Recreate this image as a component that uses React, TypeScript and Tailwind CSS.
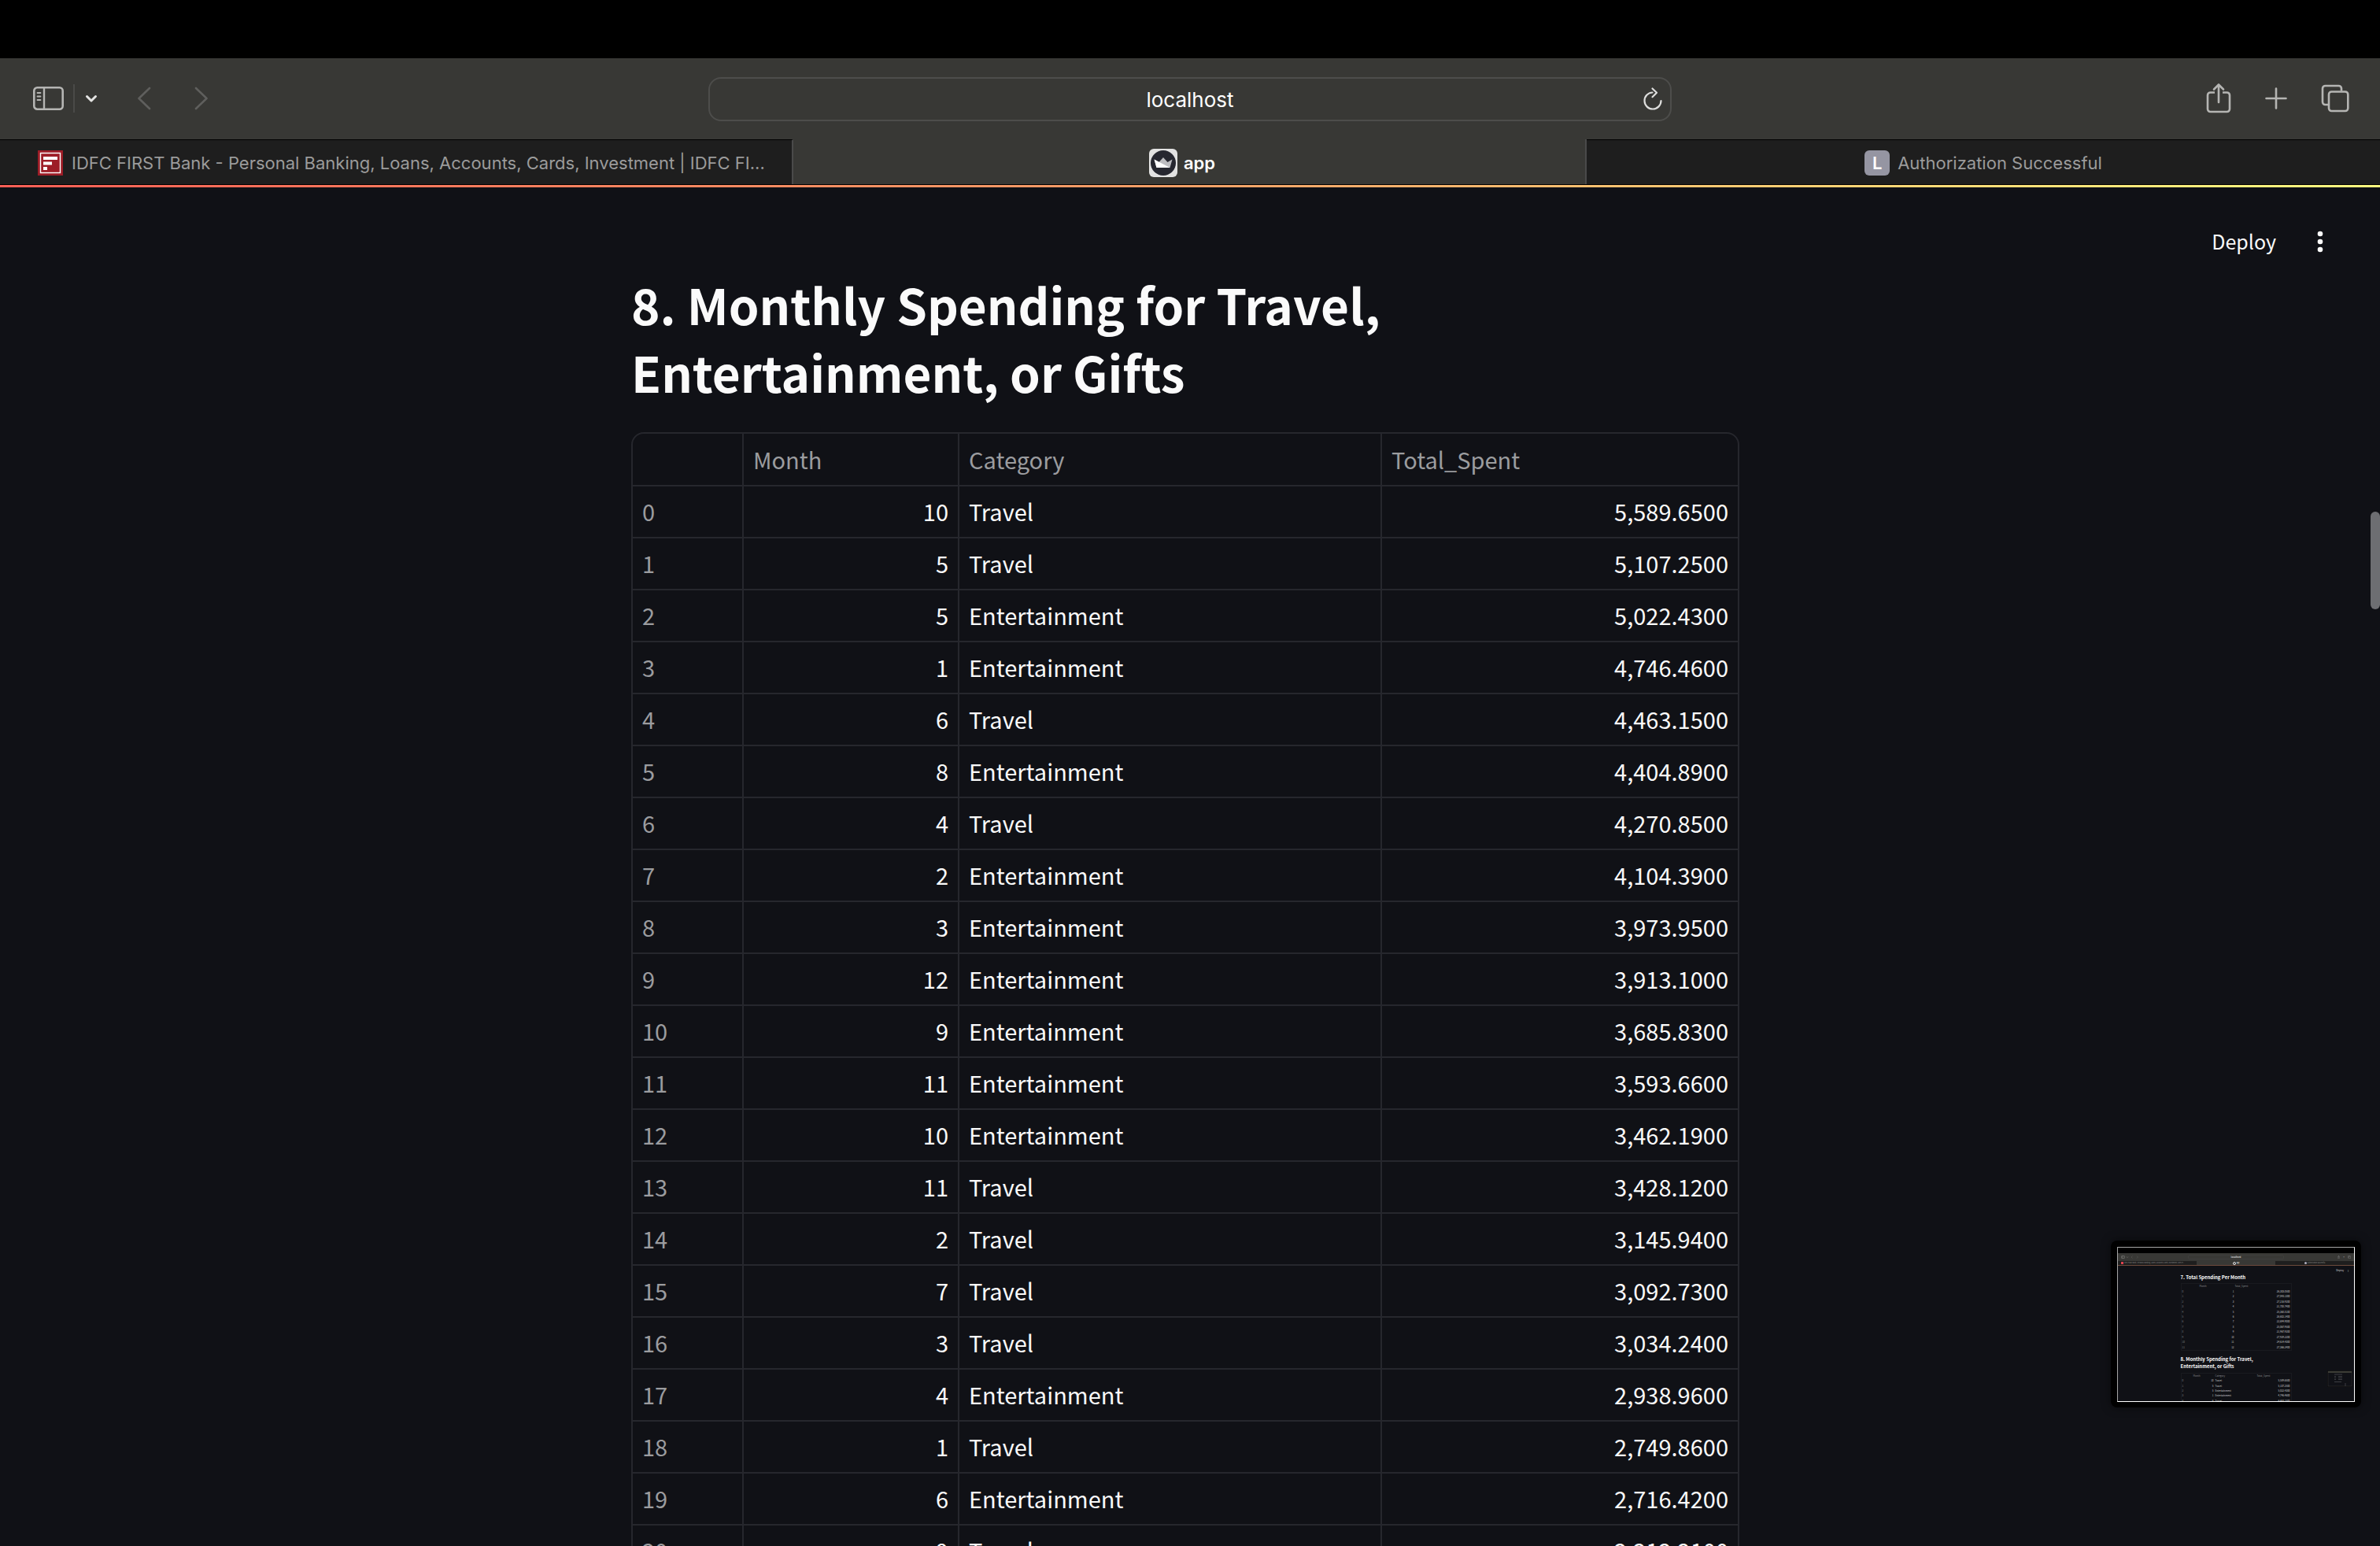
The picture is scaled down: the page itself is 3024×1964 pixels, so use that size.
import { Fragment } from "react";

const rows: [number, string, string][] = [
  [10, "Travel", "5,589.6500"],
  [5, "Travel", "5,107.2500"],
  [5, "Entertainment", "5,022.4300"],
  [1, "Entertainment", "4,746.4600"],
  [6, "Travel", "4,463.1500"],
  [8, "Entertainment", "4,404.8900"],
  [4, "Travel", "4,270.8500"],
  [2, "Entertainment", "4,104.3900"],
  [3, "Entertainment", "3,973.9500"],
  [12, "Entertainment", "3,913.1000"],
  [9, "Entertainment", "3,685.8300"],
  [11, "Entertainment", "3,593.6600"],
  [10, "Entertainment", "3,462.1900"],
  [11, "Travel", "3,428.1200"],
  [2, "Travel", "3,145.9400"],
  [7, "Travel", "3,092.7300"],
  [3, "Travel", "3,034.2400"],
  [4, "Entertainment", "2,938.9600"],
  [1, "Travel", "2,749.8600"],
  [6, "Entertainment", "2,716.4200"],
  [9, "Travel", "2,212.2100"],
];

const monthly = [
  "26,303.0500", "27,043.1300", "27,216.9200", "21,708.7400", "25,368.8100", "26,602.1400",
  "22,694.9000", "25,067.9500", "21,967.9200", "27,929.2200", "24,614.4300", "27,366.2400",
];

function SidebarIcon() {
  return (
    <svg className="h-8 w-10" viewBox="0 0 40 32" fill="none" stroke="#b5b5b3">
      <rect x="2.300" y="2.300" width="36.400" height="27.400" rx="4" strokeWidth="2.600" />
      <path d="M15 2.300v27.400" strokeWidth="2.400" />
      <path d="M6.500 9h4M6.500 13.500h4M6.500 18h4" strokeWidth="1.800" strokeLinecap="round" />
    </svg>
  );
}

function TabsIcon({ className }: { className: string }) {
  return (
    <svg className={className} viewBox="0 0 36 36" fill="none" stroke="#b5b5b3" strokeWidth="2.600" strokeLinejoin="round">
      <rect x="10" y="9.500" width="24.300" height="24.500" rx="3.500" />
      <path d="M9 26H5.500A3.500 3.500 0 0 1 2 22.500V5.500A3.500 3.500 0 0 1 5.500 2H22.500A3.500 3.500 0 0 1 26 5.500V8.500" />
    </svg>
  );
}

function ShareIcon({ className }: { className: string }) {
  return (
    <svg className={className} viewBox="0 0 32 40" fill="none" stroke="#b5b5b3" strokeWidth="2.600" strokeLinecap="round" strokeLinejoin="round">
      <path d="M11 12.500H5.500A3.500 3.500 0 0 0 2 16V33.500A3.500 3.500 0 0 0 5.500 37H26.500A3.500 3.500 0 0 0 30 33.500V16A3.500 3.500 0 0 0 26.500 12.500H21" strokeLinecap="butt" />
      <path d="M16 25V2.500M10 8.500L16 2.500l6 6" />
    </svg>
  );
}

function Toolbar() {
  return (
    <div className="grid h-[103px] grid-cols-[1fr_1224px_1fr] items-center bg-[#383835] pt-px">
      <div className="flex items-center pb-0.5 pl-[41px]">
        <button aria-label="Show sidebar"><SidebarIcon /></button>
        <span className="ml-3 h-9 w-0.5 bg-[#4a4a48]" />
        <button aria-label="Tab groups" className="ml-3">
          <svg className="h-4 w-5" viewBox="0 0 20 16" fill="none" stroke="#e4e4e3" strokeWidth="3" strokeLinecap="round" strokeLinejoin="round">
            <path d="M3.500 5.500L9 11l5.500-5.500" />
          </svg>
        </button>
        <button aria-label="Back" className="ml-12">
          <svg className="h-8 w-5" viewBox="0 0 20 32" fill="none" stroke="#5f5f5d" strokeWidth="2.600" strokeLinecap="round" strokeLinejoin="round">
            <path d="M15 3L1.500 16 15 29" />
          </svg>
        </button>
        <button aria-label="Forward" className="ml-[50px]">
          <svg className="h-8 w-5" viewBox="0 0 20 32" fill="none" stroke="#5f5f5d" strokeWidth="2.600" strokeLinecap="round" strokeLinejoin="round">
            <path d="M4 3l13.500 13L4 29" />
          </svg>
        </button>
      </div>
      <div className="flex h-14 items-center rounded-2xl border-2 border-[#4d4d4b] pr-2">
        <input
          aria-label="Address"
          defaultValue="localhost"
          className="min-w-0 flex-1 bg-transparent pt-px pl-9 text-center text-[26px] leading-8 text-white outline-none"
        />
        <button aria-label="Reload">
          <svg className="h-8 w-7" viewBox="0 0 28 32" fill="none" stroke="#dededd" strokeWidth="2.200" strokeLinecap="round" strokeLinejoin="round">
            <path d="M13.500 7.500A10.500 10.500 0 1 0 24.500 18" />
            <path d="M13.500 2.500l5.500 5.200-5.500 5.500" />
          </svg>
        </button>
      </div>
      <div className="flex items-center justify-end gap-[41px] pr-[39px] pb-[3px]">
        <button aria-label="Share"><ShareIcon className="h-10 w-8" /></button>
        <button aria-label="New tab">
          <svg className="h-8 w-8" viewBox="0 0 32 32" fill="none" stroke="#b5b5b3" strokeWidth="2.600" strokeLinecap="round">
            <path d="M16 3.500v25M3.500 16h25" />
          </svg>
        </button>
        <button aria-label="Show all tabs"><TabsIcon className="h-9 w-9" /></button>
      </div>
    </div>
  );
}

function Tabs() {
  return (
    <div role="tablist" className="grid h-[58px] grid-cols-3 border-b border-black bg-[#1e1e1e] text-[22px] leading-8 text-[#9b9b9b]">
      <button role="tab" className="flex min-w-0 items-center gap-[11px] border-t border-r-2 border-t-black border-r-[#4a4a4a] pt-px pl-12">
        <svg className="h-8 w-8 shrink-0" viewBox="0 0 32 32">
          <rect width="32" height="32" fill="#9d1d27" />
          <rect x="3.500" y="3.500" width="25" height="25" fill="none" stroke="#fff" strokeWidth="1.400" />
          <path d="M7 8h18v4H7zM7 14.500h11v4H7zM7 21h5v4H7z" fill="#fff" />
        </svg>
        <span className="whitespace-nowrap">IDFC FIRST Bank - Personal Banking, Loans, Accounts, Cards, Investment | IDFC FI...</span>
      </button>
      <button role="tab" aria-selected="true" className="flex items-center justify-center gap-2 border-r-2 border-[#4a4a4a] bg-[#383835] pt-0.5 pr-[18px] font-semibold text-white">
        <svg className="h-9 w-9" viewBox="0 0 36 36">
          <rect width="36" height="36" rx="6" fill="#e2e2e2" />
          <circle cx="18" cy="18" r="16" fill="#262730" />
          <path d="M6.500 13.500l6 3.500L18 11l5.500 6 6-3.500L26.500 24h-17z" fill="#bdbdc1" />
          <path d="M6.500 13.500L26.500 24h-17z" fill="#fff" />
        </svg>
        <span>app</span>
      </button>
      <button role="tab" className="flex items-center justify-center gap-2.5 border-t border-black pt-px">
        <span className="flex h-8 w-8 items-center justify-center rounded-md bg-[#9595a2] font-semibold text-white">L</span>
        <span>Authorization Successful</span>
      </button>
    </div>
  );
}

function DataTable() {
  return (
    <div className="mt-[34px] overflow-hidden rounded-t-2xl border-2 border-[#26272d]">
      <table className="w-full table-fixed border-collapse text-[29px] leading-[40px] text-[#fafafa]">
        <colgroup>
          <col className="w-[140px]" />
          <col className="w-[274px]" />
          <col className="w-[537px]" />
          <col />
        </colgroup>
        <thead>
          <tr className="h-[66px] border-b-2 border-[#26272d] text-left text-[#9b9c9f]">
            <th aria-label="Index" className="border-r-2 border-[#26272d]" />
            <th className="border-r-2 border-[#26272d] px-3 pb-0.5 font-normal">Month</th>
            <th className="border-r-2 border-[#26272d] px-3 pb-0.5 font-normal">Category</th>
            <th className="px-3 pb-0.5 font-normal">Total_Spent</th>
          </tr>
        </thead>
        <tbody>
          {rows.map(([month, category, total], i) => (
            <tr key={i} className="h-[66px] border-b-2 border-[#26272d]">
              <td className="border-r-2 border-[#26272d] px-3 pb-0.5 text-[#9b9c9f]">{i}</td>
              <td className="border-r-2 border-[#26272d] px-3 pb-0.5 text-right">{month}</td>
              <td className="border-r-2 border-[#26272d] px-3 pb-0.5">{category}</td>
              <td className="px-3 pb-0.5 text-right">{total}</td>
            </tr>
          ))}
        </tbody>
      </table>
    </div>
  );
}

function SidebarMini() {
  return (
    <svg className="h-1 w-6" viewBox="0 0 24 4" fill="none" stroke="#8a8a88" strokeWidth="0.500">
      <rect x="0.500" y="0.500" width="4" height="3" rx="0.500" />
      <path d="M2 0.500v3M7 1.500l1 1 1-1" />
      <path d="M14.500 0.500L13 2l1.500 1.500M20 0.500L21.500 2 20 3.500" stroke="#5f5f5d" />
    </svg>
  );
}

function Preview() {
  return (
    <div className="absolute right-6 bottom-44 h-[212px] w-[318px] rounded-lg bg-black p-2 font-['Noto_Sans_CJK_SC',sans-serif] shadow-[0_0_12px_rgba(0,0,0,0.5)]">
      <div className="flex h-[197px] flex-col overflow-hidden border border-t-[#a5a5a5] border-r-white border-b-white border-l-[#a5a5a5] bg-[#101116] text-[3px] leading-[4px] text-[#cfcfd0]">
        <div className="h-[7px] shrink-0 bg-black" />
        <div className="grid h-[10px] shrink-0 grid-cols-[1fr_122px_1fr] items-center bg-[#383835] px-1">
          <SidebarMini />
          <span className="rounded-xs border border-[#3e3e3c] text-center text-white">localhost</span>
          <span className="flex items-center justify-end gap-1">
            <ShareIcon className="h-1 w-[3px]" />
            <span>+</span>
            <TabsIcon className="h-1 w-1" />
          </span>
        </div>
        <div className="grid h-[6px] shrink-0 grid-cols-3 items-center border-b border-[#6d4a3c] bg-[#1e1e1e] text-[2px] text-[#8a8a8a]">
          <span className="flex items-center gap-px pl-1 whitespace-nowrap">
            <i className="h-[3px] w-[3px] bg-[#e04450]" />
            IDFC FIRST Bank - Personal Banking, Loans, Accounts, Cards, Investment | IDFC FI...
          </span>
          <span className="flex h-full items-center justify-center gap-px bg-[#383835] text-white">
            <i className="h-1 w-1 rounded-full border border-[#e2e2e2]" />
            app
          </span>
          <span className="flex items-center justify-center gap-px">
            <i className="h-[3px] w-[3px] rounded-full bg-[#b0b0bd]" />
            Authorization Successful
          </span>
        </div>
        <div className="flex h-[11px] shrink-0 items-center justify-end gap-1 pr-1.5">
          <span>Deploy</span>
          <span>⋮</span>
        </div>
        <div className="mx-auto w-[141px]">
          <div className="text-[6px] leading-[8px] font-bold text-[#fafafa]">7. Total Spending Per Month</div>
          <div className="mt-[3px] grid h-[86px] auto-rows-fr grid-cols-[22px_44px_1fr] items-center border border-[#191a1f] px-px">
            <span />
            <span className="text-[#88898c]">Month</span>
            <span className="pl-px text-[#88898c]">Total_Spent</span>
            {monthly.map((value, i) => (
              <Fragment key={i}>
                <span className="text-[#88898c]">{i}</span>
                <span className="text-right">{i + 1}</span>
                <span className="text-right">{value}</span>
              </Fragment>
            ))}
          </div>
          <div className="mt-1.5 text-[6px] leading-[9px] font-bold text-[#fafafa]">
            8. Monthly Spending for Travel,<br />Entertainment, or Gifts
          </div>
          <div className="mt-1 grid h-[40px] auto-rows-fr grid-cols-[14px_26px_55px_1fr] items-center border border-[#191a1f] px-px">
            <span />
            <span className="text-[#88898c]">Month</span>
            <span className="pl-0.5 text-[#88898c]">Category</span>
            <span className="text-[#88898c]">Total_Spent</span>
            {rows.slice(0, 5).map(([month, category, total], i) => (
              <Fragment key={i}>
                <span className="text-[#88898c]">{i}</span>
                <span className="text-right">{month}</span>
                <span className="pl-0.5">{category}</span>
                <span className="text-right">{total}</span>
              </Fragment>
            ))}
          </div>
        </div>
      </div>
      <svg className="absolute right-[11px] bottom-[26px] h-[21px] w-8" viewBox="0 0 32 21">
        <rect width="32" height="21" rx="1" fill="#08080a" />
        <rect x="1" y="1" width="30" height="19" fill="#101116" stroke="#3a3a3a" strokeWidth="0.500" />
        <path d="M1 2h30" stroke="#4a4a40" strokeWidth="1.500" />
        <path d="M9 5h10M9 7.500h2M14 7.500h5M9 9.500h2M14 9.500h5M9 11.500h2M14 11.500h5M9 14.500h9M22 17h2M22 19h2" stroke="#3c3d42" />
      </svg>
    </div>
  );
}

export default function App() {
  return (
    <div className="relative flex h-screen flex-col overflow-hidden bg-[#101116] font-['Inter',sans-serif]">
      <div className="h-[74px] shrink-0 bg-black" />
      <Toolbar />
      <Tabs />
      <div className="h-[3px] shrink-0 bg-linear-to-r from-[#ff5f56] via-[#f5a168] to-[#fffd80]" />
      <div className="flex min-h-0 flex-1 font-['Noto_Sans_CJK_SC',sans-serif]">
        <div className="min-w-0 flex-1">
          <header className="flex h-[105px] items-center justify-end gap-[52px] pt-8 pr-[60px] text-[25px] text-[#fafafa]">
            <button>Deploy</button>
            <button aria-label="Main menu">
              <svg className="h-7 w-2" viewBox="0 0 8 28" fill="#fafafa">
                <circle cx="4" cy="4" r="3.300" />
                <circle cx="4" cy="14" r="3.300" />
                <circle cx="4" cy="24" r="3.300" />
              </svg>
            </button>
          </header>
          <main className="mx-auto w-full max-w-[1408px]">
            <h1 className="max-w-[1100px] text-[62px] leading-[86px] font-bold text-[#fafafa]">
              8. Monthly Spending for Travel, Entertainment, or Gifts
            </h1>
            <DataTable />
          </main>
        </div>
        <div className="w-3 shrink-0 pt-[412px]">
          <div className="h-[124px] rounded-full bg-[#6d6e72]" />
        </div>
      </div>
      <Preview />
    </div>
  );
}
